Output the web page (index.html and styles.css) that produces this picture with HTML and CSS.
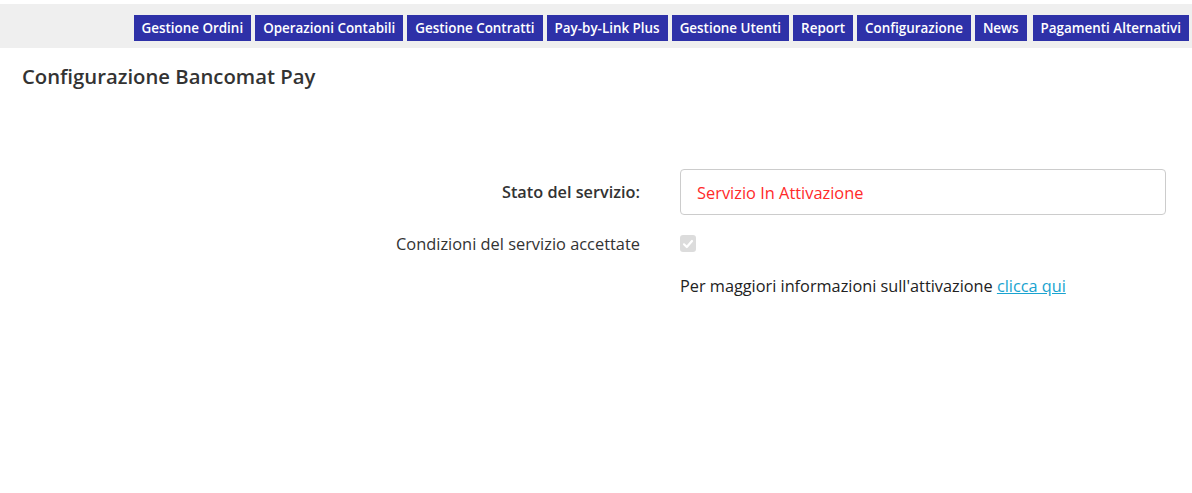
FILE: index.html
```html
<!DOCTYPE html>
<html lang="it">
<head>
<meta charset="utf-8">
<title>Configurazione Bancomat Pay</title>
<link rel="stylesheet" href="styles.css">
</head>
<body>
<header class="topbar">
  <nav class="menu">
    <a class="menu-item" href="#">Gestione Ordini</a>
    <a class="menu-item" href="#">Operazioni Contabili</a>
    <a class="menu-item" href="#">Gestione Contratti</a>
    <a class="menu-item" href="#">Pay-by-Link Plus</a>
    <a class="menu-item" href="#">Gestione Utenti</a>
    <a class="menu-item" href="#">Report</a>
    <a class="menu-item" href="#">Configurazione</a>
    <a class="menu-item" href="#">News</a>
    <a class="menu-item menu-item-last" href="#">Pagamenti Alternativi</a>
  </nav>
</header>
<main class="page">
  <h1 class="title">Configurazione Bancomat Pay</h1>
  <form class="form">
    <div class="row">
      <label class="label label-bold">Stato del servizio:</label>
      <div class="field">
        <div class="input">Servizio In Attivazione</div>
      </div>
    </div>
    <div class="row row-check">
      <label class="label">Condizioni del servizio accettate</label>
      <div class="field">
        <span class="checkbox"><svg width="12" height="12" viewBox="0 0 12 12"><path d="M2 6.3 L4.8 9 L10 3" fill="none" stroke="#fff" stroke-width="2.2" stroke-linecap="round" stroke-linejoin="round"/></svg></span>
      </div>
    </div>
    <div class="row row-info">
      <div class="label"></div>
      <div class="field info">Per maggiori informazioni sull'attivazione <a class="link" href="#">clicca qui</a></div>
    </div>
  </form>
</main>
</body>
</html>
```
FILE: styles.css
```css
* { box-sizing: border-box; }
html, body { margin: 0; padding: 0; background: #fff; }
body {
  font-family: "Open Sans", "Noto Sans", "DejaVu Sans", sans-serif;
  color: #333;
  font-size: 16px;
}
.topbar {
  margin-top: 4px;
  height: 44px;
  background: #efefef;
  display: flex;
  align-items: center;
  justify-content: flex-end;
  padding-right: 3px;
}
.menu {
  display: flex;
  gap: 4px;
  margin-top: 4px;
}
.menu-item {
  display: flex;
  align-items: center;
  height: 26px;
  padding: 0 8px;
  background: #2e31a8;
  color: #fff;
  font-size: 13.42px;
  font-weight: 600;
  text-decoration: none;
  white-space: nowrap;
}
.menu-item-last { margin-left: 2px; }
.page { padding: 0 0 0 22px; }
.title {
  margin: 15px 0 0;
  font-size: 20.3px;
  font-weight: 600;
  color: #333;
  line-height: 26px;
}
.form { margin-top: 80px; }
.row {
  display: grid;
  grid-template-columns: 618px 486px;
  column-gap: 40px;
  align-items: center;
}
.label {
  text-align: right;
  font-size: 16.4px;
  color: #333;
}
.label-bold { font-weight: 600; font-size: 16.3px; }
.input {
  height: 46px;
  border: 1px solid #ccc;
  border-radius: 4px;
  padding: 0 16px;
  display: flex;
  align-items: center;
  color: #ff2a2a;
  font-size: 16.4px;
}
.row-check { margin-top: 17px; }
.checkbox {
  width: 16px;
  height: 17px;
  border-radius: 3px;
  background: #dcdcdc;
  display: flex;
  align-items: center;
  justify-content: center;
}
.row-info { margin-top: 20px; }
.info { font-size: 16.3px; color: #222; }
.link { color: #18a3d0; text-decoration: underline; }
```
